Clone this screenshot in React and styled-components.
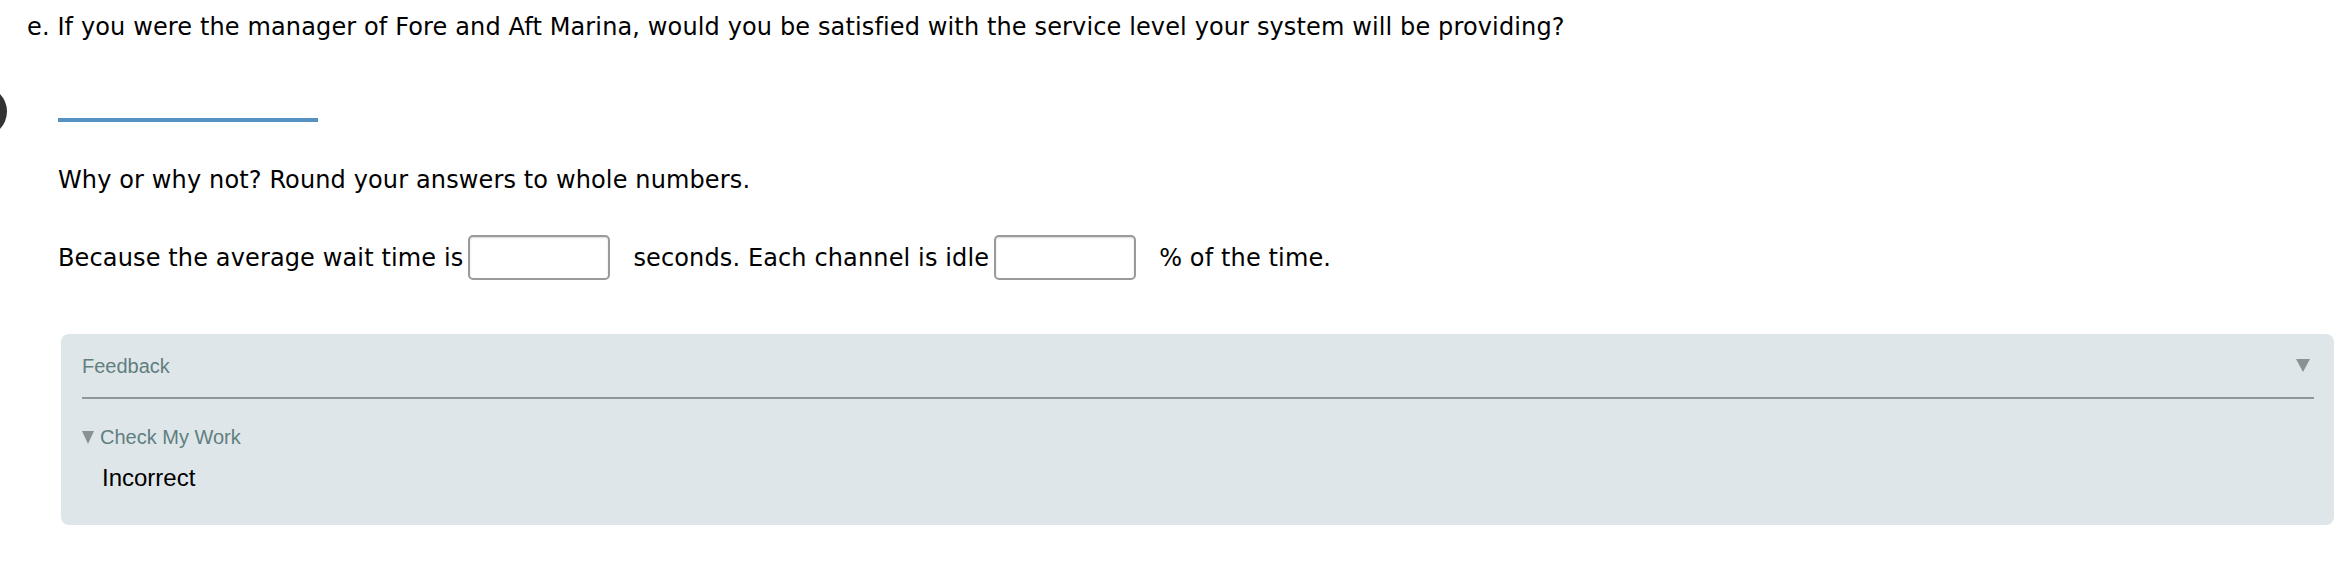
import React from 'react';
import styled, { createGlobalStyle } from 'styled-components';

const GlobalStyle = createGlobalStyle`
    html, body {
        margin: 0;
        padding: 0;
        background: #fff;
    }
`;

const Page = styled.div`
    position: relative;
    padding: 9px 10px 0 27px;
    font-family: "DejaVu Sans", Verdana, Tahoma, sans-serif;
    font-size: 24px;
    letter-spacing: 0.13px;
    line-height: 36px;
    color: #000;
    overflow: hidden;
    height: 570px;
    box-sizing: border-box;
`;

const Question = styled.div`
    white-space: nowrap;
`;

const Badge = styled.div`
    position: absolute;
    left: -44px;
    top: 86px;
    width: 51px;
    height: 51px;
    border-radius: 50%;
    background: #333;
`;

const Body = styled.div`
    padding-left: 31px;
`;

const AnswerSlot = styled.div`
    width: 260px;
    height: 77px;
    border-bottom: 4px solid #5592c2;
    box-sizing: border-box;
`;

const Line = styled.div`
    margin-top: ${p => p.gap}px;
    display: flex;
    align-items: center;
    white-space: nowrap;
`;

const Blank = styled.input`
    width: 142px;
    height: 45px;
    box-sizing: border-box;
    margin: 0 ${p => p.after}px 0 5px;
    border: 2px solid #9a9a9a;
    border-radius: 5px;
    box-shadow: inset 0 1px 2px rgba(0, 0, 0, 0.15);
    background: #fff;
    font: inherit;
    padding: 0 6px;
`;

const Panel = styled.div`
    margin: 54px 0 0 34px;
    width: 2273px;
    height: 191px;
    box-sizing: border-box;
    background: #dfe6e9;
    border-radius: 8px;
    padding: 0 20px 0 21px;
    font-family: "Liberation Sans", Arial, sans-serif;
    letter-spacing: 0;
`;

const PanelHead = styled.div`
    display: flex;
    justify-content: space-between;
    align-items: center;
    height: 63px;
    border-bottom: 2px solid #8e9799;
    font-size: 20px;
    color: #5f7f80;
`;

const Caret = styled.span`
    display: inline-block;
    width: 0;
    height: 0;
    border-left: ${p => p.w / 2}px solid transparent;
    border-right: ${p => p.w / 2}px solid transparent;
    border-top: ${p => p.h}px solid #8a9294;
    margin-right: ${p => p.right || 0}px;
`;

const Toggle = styled.div`
    display: flex;
    align-items: center;
    margin-top: 26px;
    font-size: 20px;
    line-height: 24px;
    color: #5f7f80;
    gap: 6px;
`;

const Result = styled.div`
    margin: 15px 0 0 20px;
    font-size: 24px;
    line-height: 28px;
    color: #000;
`;

export default function App() {
    return (
        <>
            <GlobalStyle />
            <Page>
                <Badge />
                <Question>
                    e. If you were the manager of Fore and Aft Marina, would you be satisfied with the service level your system will be providing?
                </Question>
                <Body>
                    <AnswerSlot />
                    <Line gap={40}>Why or why not? Round your answers to whole numbers.</Line>
                    <Line gap={37}>
                        Because the average wait time is
                        <Blank after={23} />
                        seconds. Each channel is idle
                        <Blank after={23} />
                        % of the time.
                    </Line>
                </Body>
                <Panel>
                    <PanelHead>
                        <span>Feedback</span>
                        <Caret w={15} h={13} right={4} />
                    </PanelHead>
                    <Toggle>
                        <Caret w={12} h={13} />
                        <span>Check My Work</span>
                    </Toggle>
                    <Result>Incorrect</Result>
                </Panel>
            </Page>
        </>
    );
}
